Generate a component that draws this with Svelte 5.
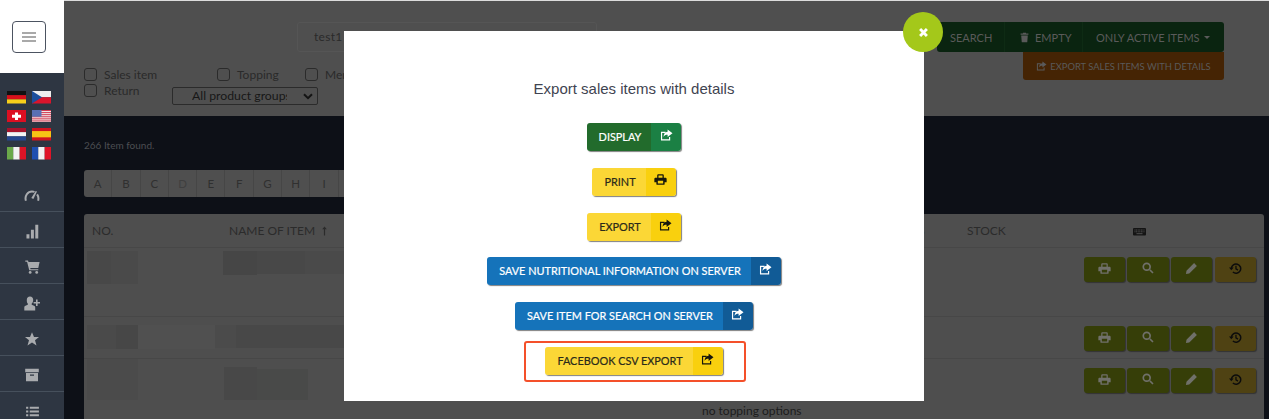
<script>
  const flags = ["de", "cz", "ch", "us", "nl", "es", "it", "fr"];
  const navIcons = ["gauge", "bars", "cart", "user", "star", "archive", "list"];
  const letters = "ABCDEFGHIJKL".split("");
  const modalButtons = [
    { label: "DISPLAY", tone: "green", icon: "share" },
    { label: "PRINT", tone: "yellow", icon: "print" },
    { label: "EXPORT", tone: "yellow", icon: "share" },
    { label: "SAVE NUTRITIONAL INFORMATION ON SERVER", tone: "blue", icon: "share" },
    { label: "SAVE ITEM FOR SEARCH ON SERVER", tone: "blue", icon: "share" },
    { label: "FACEBOOK CSV EXPORT", tone: "yellow", icon: "share", marked: true },
  ];
  // blurred-out cells of the item table
  const rows = [
    {
      cls: "r1",
      blocks: [
        { w: 24, h: 33, c: "#484848" },
        { w: 27, h: 33, c: "#4a4a4a" },
        { w: 85, h: 33, c: "#4e4e4e" },
        { w: 34, h: 24, c: "#464646" },
        { w: 48, h: 23, c: "#484848" },
        { w: 40, h: 23, c: "#4a4a4a" },
      ],
    },
    {
      cls: "r2",
      blocks: [
        { w: 29, h: 24, c: "#4a4a4a" },
        { w: 22, h: 24, c: "#474747" },
        { w: 77, h: 24, c: "#505050" },
        { w: 21, h: 23, c: "#4b4b4b" },
        { w: 108, h: 23, c: "#484848" },
      ],
    },
    {
      cls: "r3",
      blocks: [
        { w: 51, h: 41, c: "#4b4b4b" },
        { w: 86, h: 41, c: "#4e4e4e" },
        { w: 33, h: 33, c: "#484848", mt: 8 },
        { w: 51, h: 31, c: "#494a49", mt: 10 },
      ],
    },
  ];
</script>

{#snippet icon(name)}
  {#if name === "share"}
    <svg viewBox="0 0 14 13" width="13" height="12"><path d="M1 3h5v1.300H2.300v6.900h7.400V8.600H11V12.500H1z" /><path d="M8.200 0.500 13.500 4.600 8.200 8.600V6.200C6 6.200 4.600 6.800 3.800 8.600 3.800 5.600 5.400 3.200 8.200 3z" /></svg>
  {:else if name === "print"}
    <svg viewBox="0 0 14 12" width="13" height="11"><path fill-rule="evenodd" d="M3.400 1.600C3.400.7 4 .2 4.800.2h4.400c.8 0 1.400.5 1.400 1.400V4h1.700c.8 0 1.400.6 1.400 1.400V9h-2.200v1.800c0 .6-.4 1-1 1H3.500c-.6 0-1-.4-1-1V9H.3V5.400C.3 4.600.9 4 1.700 4h1.700zM4.800 1.500V4h4.400V1.500zM4.100 7.400v3h5.800v-3z" /></svg>
  {:else if name === "search"}
    <svg viewBox="0 0 14 14" width="12" height="12"><circle cx="5.500" cy="5.500" r="4" fill="none" stroke="currentColor" stroke-width="2" /><path d="M8.500 9.800 9.800 8.500 13.500 12.200 12.200 13.500z" /></svg>
  {:else if name === "pencil"}
    <svg viewBox="0 0 14 14" width="13" height="13"><path d="M9.800 1.200 12.800 4.200 4.600 12.400 1 13 1.600 9.400z" /></svg>
  {:else if name === "history"}
    <svg viewBox="0 0 14 14" width="13" height="13"><path fill="none" stroke="currentColor" stroke-width="1.600" d="M2.600 6.800A5 5 0 1 1 4.200 10.800" /><path d="M0 5.800h5L2.500 8.800z" /><path fill="none" stroke="currentColor" stroke-width="1.400" d="M7.500 4v3.400l2.200 1.400" /></svg>
  {:else if name === "trash"}
    <svg viewBox="0 0 11 14" width="9" height="11"><path d="M3.500.8h4v1.200h3V3.400H.5V2h3zM1.300 4.400h8.400L9 13.200H2z" /></svg>
  {:else if name === "gauge"}
    <svg viewBox="0 0 16 11" width="16" height="11"><path fill="none" stroke="currentColor" stroke-width="2" d="M1.900 10.700C.4 6 3.800 1.400 8 1.400c.9 0 1.800.2 2.500.6M13.100 4.300c1.300 1.800 1.600 4.200 1 6.400" /><path d="M11.700.9 13 1.600 9.400 8.900 7.300 8z" /></svg>
  {:else if name === "bars"}
    <svg viewBox="0 0 14 16" width="13" height="15"><path d="M.5 11h3.200v4.500H.5zM5.300 6h3.200v9.500H5.300zM10 .8h3.200v14.700H10z" /></svg>
  {:else if name === "cart"}
    <svg viewBox="0 0 16 15" width="15" height="14"><path d="M.3.500h2.900l.5 1.700h11.900l-1.400 6.300H5.600l.3 1.300h8.300v1.300H4.500L2.200 1.800H.3z" /><circle cx="5.500" cy="13.300" r="1.500" /><circle cx="12.500" cy="13.300" r="1.500" /></svg>
  {:else if name === "user"}
    <svg viewBox="0 0 16 15" width="16" height="15"><path d="M6 .5c2 0 3.200 1.500 3.200 3.500 0 1.500-.7 3-1.500 3.600v1.200c1.500.6 3.500 1 3.500 2.500v3.200H.3v-3.200c0-1.500 2-1.900 3.500-2.500V7.600C3 7 2.800 5.500 2.800 4 2.800 2 4 .5 6 .5z" /><path d="M12 3.500h1.600v2.400H16v1.600h-2.400v2.400H12V7.500H9.600V5.900H12z" /></svg>
  {:else if name === "star"}
    <svg viewBox="0 0 14 14" width="14" height="14"><path d="M7 .3 9 5h5L10 8.300l1.500 5.200L7 10.600 2.500 13.500 4 8.300 0 5h5z" /></svg>
  {:else if name === "archive"}
    <svg viewBox="0 0 14 14" width="14" height="14"><path fill-rule="evenodd" d="M.2.800h13.600v3.400H.2zM1 5h12v8.200H1zM5 6.500v1.300h4V6.500z" /></svg>
  {:else if name === "list"}
    <svg viewBox="0 0 14 12" width="13" height="11"><path d="M0 .8h2.400v2.200H0zM4 .8h10v2.200H4zM0 4.900h2.400v2.200H0zM4 4.900h10v2.200H4zM0 9h2.400v2.200H0zM4 9h10v2.200H4z" /></svg>
  {/if}
{/snippet}

{#snippet flag(code)}
  <svg class="flag" viewBox="0 0 19 13" preserveAspectRatio="none">
    {#if code === "de"}
      <rect width="19" height="4.400" fill="#111" /><rect y="4.300" width="19" height="4.400" fill="#d8101a" /><rect y="8.700" width="19" height="4.300" fill="#f7cf1a" />
    {:else if code === "cz"}
      <rect width="19" height="6.500" fill="#eee" /><rect y="6.500" width="19" height="6.500" fill="#d8152c" /><path d="M0 0 10 6.500 0 13z" fill="#1c4f9c" />
    {:else if code === "ch"}
      <rect width="19" height="13" fill="#dc0f22" /><path d="M8 2.500h3v2.500h3v3h-3v2.500H8V8H5V5h3z" fill="#fff" />
    {:else if code === "us"}
      <rect width="19" height="13" fill="#f4f4f4" />
      {#each [0, 2, 4, 6, 8, 10, 12] as y}<rect y={y} width="19" height="1" fill="#d0324a" />{/each}
      <rect width="9.500" height="7" fill="#5a70b4" />
    {:else if code === "nl"}
      <rect width="19" height="4.400" fill="#a8132c" /><rect y="4.300" width="19" height="4.400" fill="#f4f4f4" /><rect y="8.700" width="19" height="4.300" fill="#24478f" />
    {:else if code === "es"}
      <rect width="19" height="13" fill="#d0141f" /><rect y="3.200" width="19" height="6.500" fill="#f7c415" />
    {:else if code === "it"}
      <rect width="6.400" height="13" fill="#6aa84a" /><rect x="6.300" width="6.400" height="13" fill="#f2f2f2" /><rect x="12.700" width="6.300" height="13" fill="#dc1426" />
    {:else if code === "fr"}
      <rect width="6.400" height="13" fill="#1f4fb0" /><rect x="6.300" width="6.400" height="13" fill="#f2f2f2" /><rect x="12.700" width="6.300" height="13" fill="#e01428" />
    {/if}
  </svg>
{/snippet}

<div class="page">
  <aside class="sidebar">
    <div class="logo">
      <button class="burger" type="button" aria-label="menu"><span></span><span></span><span></span></button>
    </div>
    <div class="flags">
      {#each flags as code}
        {@render flag(code)}
      {/each}
    </div>
    <nav class="nav">
      {#each navIcons as name}
        <div class="nav-item">{@render icon(name)}</div>
      {/each}
    </nav>
  </aside>

  <main class="main">
    <section class="band">
      <div class="band-left">
        <div class="search-input">test1</div>
        <div class="filters">
          <label class="check c1"><i></i>Sales item</label>
          <label class="check c2"><i></i>Topping</label>
          <label class="check"><i></i>Menu</label>
        </div>
        <div class="filters second">
          <label class="check c3"><i></i>Return</label>
          <div class="select">
            <span>All product groups</span>
            <svg viewBox="0 0 10 7" width="10" height="7"><path d="M1 1.200 5 5.200 9 1.200" fill="none" stroke="#141414" stroke-width="2" /></svg>
          </div>
        </div>
      </div>
      <div class="band-right">
        <div class="toolbar">
          <span class="tool t-search">SEARCH</span>
          <span class="tool t-empty">{@render icon("trash")}EMPTY</span>
          <span class="tool t-active">ONLY ACTIVE ITEMS<b class="caret"></b></span>
        </div>
        <div class="export-all">{@render icon("share")}EXPORT SALES ITEMS WITH DETAILS</div>
      </div>
    </section>

    <section class="content">
      <div class="found">266 Item found.</div>
      <div class="letters">
        {#each letters as l}
          <span class:off={l === "D"}>{l}</span>
        {/each}
      </div>
      <div class="card">
        <div class="thead">
          <span>NO.</span>
          <span class="sorted">NAME OF ITEM
            <svg viewBox="0 0 5 10" width="5" height="10"><path d="M2.500 0.500 4.800 3.200H3.100V9.500H1.900V3.200H.2z" /></svg>
          </span>
          <span class="sliver">S</span>
          <span>STOCK</span>
          <svg class="kbd" viewBox="0 0 13 8" width="13" height="8"><rect width="13" height="7.500" rx="1" fill="#141414" /><path d="M1.500 2h10M1.500 3.800h10" stroke="#6a6a6a" stroke-width=".7" stroke-dasharray="1 .6" /><path d="M3.500 5.700h6" stroke="#6a6a6a" stroke-width=".7" /></svg>
        </div>
        {#each rows as row}
          <div class="row {row.cls}">
            <div class="blocks">
              {#each row.blocks as b}
                <span style:width="{b.w}px" style:height="{b.h}px" style:background={b.c} style:margin-top="{b.mt ?? 0}px"></span>
              {/each}
            </div>
            <div class="actions">
              <span class="act">{@render icon("print")}</span>
              <span class="act">{@render icon("search")}</span>
              <span class="act">{@render icon("pencil")}</span>
              <span class="act last">{@render icon("history")}</span>
            </div>
          </div>
        {/each}
        <div class="no-topping">no topping options</div>
      </div>
    </section>
  </main>

  <div class="modal">
    <button class="close" type="button" aria-label="close">
      <svg viewBox="0 0 10 10" width="9" height="9"><path d="M1.200 1.200 8.800 8.800M8.800 1.200 1.200 8.800" stroke="#fff" stroke-width="3.200" /></svg>
    </button>
    <h2>Export sales items with details</h2>
    <div class="stack">
      {#each modalButtons as b}
        <div class="btn-wrap" class:marked={b.marked}>
          <button class="btn {b.tone}" type="button">
            <span class="btn-label">{b.label}</span>
            <span class="btn-icon">{@render icon(b.icon)}</span>
          </button>
        </div>
      {/each}
    </div>
  </div>
</div>

<style>
  :global(body) {
    margin: 0;
    background: #0d1017;
  }
  svg {
    fill: currentColor;
    display: block;
    flex: none;
  }
  .page {
    position: relative;
    display: flex;
    width: 1269px;
    height: 419px;
    overflow: hidden;
    font-family: Lato, "Liberation Sans", sans-serif;
  }

  .sidebar {
    width: 64px;
    flex: none;
    background: #2e3642;
    display: flex;
    flex-direction: column;
  }
  .logo {
    height: 73px;
    flex: none;
    background: #fff;
    padding: 21px 0 0 12px;
    box-sizing: border-box;
  }
  .burger {
    width: 34px;
    height: 32px;
    padding: 0;
    background: #fff;
    border: 1px solid #4c5361;
    border-radius: 4px;
    display: flex;
    flex-direction: column;
    align-items: center;
    justify-content: center;
    gap: 1.500px;
  }
  .burger span {
    width: 14px;
    height: 2.500px;
    background: #a9a9a9;
  }
  .flags {
    flex: none;
    display: grid;
    grid-template-columns: 19px 19px;
    grid-auto-rows: 12.500px;
    column-gap: 6px;
    row-gap: 6.200px;
    padding: 18px 0 0 7px;
    height: 84px;
  }
  .flag {
    width: 19px;
    height: 12.500px;
  }
  .nav {
    flex: none;
    margin-top: 1px;
  }
  .nav-item {
    height: 36px;
    box-sizing: border-box;
    padding-top: 3px;
    border-bottom: 1px solid #46505c;
    display: flex;
    align-items: center;
    justify-content: center;
    color: #a9abae;
  }

  .main {
    flex: 1;
    min-width: 0;
    display: flex;
    flex-direction: column;
    background: #dcdcdc;
  }
  .band {
    height: 115px;
    margin-top: 1px;
    flex: none;
    background: #4f4f4f;
    display: flex;
    justify-content: space-between;
    padding: 21px 45px 0 20px;
    box-sizing: border-box;
    color: #2a2a2a;
  }
  .search-input {
    margin-left: 213px;
    width: 300px;
    height: 30px;
    box-sizing: border-box;
    border: 1px solid #555;
    border-radius: 3px;
    padding-left: 16px;
    font-size: 12px;
    line-height: 28px;
    letter-spacing: 0.300px;
  }
  .filters {
    display: flex;
    margin-top: 15px;
    font-size: 12px;
    line-height: 16px;
  }
  .filters.second {
    margin-top: 0;
  }
  .check {
    display: flex;
    align-items: center;
    gap: 7px;
    height: 16px;
  }
  .check i {
    width: 11px;
    height: 11px;
    border: 1px solid #2b2b2b;
    border-radius: 3px;
    margin-top: -2px;
  }
  .c1 {
    width: 133px;
  }
  .c2 {
    width: 88px;
  }
  .c3 {
    width: 88px;
  }
  .select {
    width: 146px;
    height: 18px;
    margin-top: 4px;
    box-sizing: border-box;
    border: 1px solid #2b2b2b;
    border-radius: 2px;
    display: flex;
    align-items: center;
    padding-left: 19px;
    color: #171717;
    gap: 16px;
    font-size: 12.250px;
  }
  .select span {
    width: 95px;
    overflow: hidden;
    white-space: nowrap;
  }
  .band-right {
    width: 287px;
    display: flex;
    flex-direction: column;
    align-items: flex-end;
    color: #5a5a5a;
    font-size: 11px;
  }
  .toolbar {
    width: 100%;
    height: 30px;
    background: #0a2410;
    border-radius: 3px;
    display: flex;
    align-items: center;
  }
  .tool {
    height: 100%;
    display: flex;
    align-items: center;
    gap: 6px;
    border-right: 1px solid #0e2b14;
    box-sizing: border-box;
  }
  .t-search {
    padding-left: 13px;
    width: 68px;
  }
  .t-empty {
    padding-left: 15px;
    width: 78px;
  }
  .t-active {
    padding-left: 13px;
    border: 0;
    gap: 4px;
  }
  .caret {
    border: 3.500px solid transparent;
    border-top-color: currentColor;
    border-bottom: 0;
  }
  .export-all {
    width: 201px;
    height: 28px;
    background: #452404;
    border-radius: 0 0 3px 3px;
    display: flex;
    align-items: center;
    justify-content: center;
    gap: 3px;
    font-size: 9.400px;
  }
  .export-all svg {
    width: 11px;
    height: 10px;
  }

  .content {
    flex: 1;
    background: #0d1017;
    padding: 21px 5px 0 20px;
    min-height: 0;
  }
  .found {
    font-size: 10px;
    line-height: 16px;
    color: #4c4e52;
  }
  .letters {
    display: flex;
    margin-top: 17px;
    height: 27px;
    width: 340px;
    background: #4f4f4f;
    border-radius: 3px;
    overflow: hidden;
  }
  .letters span {
    width: 28.300px;
    flex: none;
    box-sizing: border-box;
    border-right: 1px solid #464646;
    display: flex;
    align-items: center;
    justify-content: center;
    font-size: 11.500px;
    color: #303030;
  }
  .letters .off {
    color: #3f3f3f;
  }
  .card {
    margin-top: 17px;
    background: #4e4e4e;
    border-radius: 3px 3px 0 0;
    height: 205px;
    overflow: hidden;
  }
  .thead {
    height: 34px;
    box-sizing: border-box;
    display: flex;
    align-items: center;
    padding: 0 0 0 8px;
    border-bottom: 1px solid #474747;
    font-size: 12px;
    color: #2b2b2b;
  }
  .thead span {
    flex: none;
  }
  .thead span:nth-child(1) {
    width: 137px;
  }
  .thead span:nth-child(2) {
    width: 689px;
  }
  .sorted {
    display: flex;
    align-items: center;
    gap: 4px;
    white-space: pre;
  }
  .thead .sliver {
    width: 49px;
  }
  .kbd {
    margin-left: 127px;
    margin-top: 3px;
  }
  .row {
    display: flex;
    justify-content: space-between;
    box-sizing: border-box;
    border-bottom: 1px solid #474747;
    padding: 3px 8px 0 3px;
  }
  .r1 {
    height: 69px;
  }
  .r2 {
    height: 42px;
    padding-top: 8px;
  }
  .r3 {
    height: 44px;
    padding-top: 0;
    border: 0;
  }
  .blocks {
    display: flex;
    align-items: flex-start;
  }
  .blocks span {
    display: block;
    flex: none;
  }
  .actions {
    display: flex;
    gap: 2px;
    margin-top: 6px;
  }
  .r2 .actions {
    margin-top: 1px;
  }
  .r3 .actions {
    margin-top: 9px;
  }
  .act {
    width: 41.250px;
    height: 25px;
    background: #363e08;
    border-radius: 3px;
    box-shadow: 1px 1px 1px rgba(0, 0, 0, 0.35);
    color: #70706a;
    display: flex;
    align-items: center;
    justify-content: center;
    padding-bottom: 3px;
    box-sizing: border-box;
  }
  .act.last {
    background: #4f4213;
    color: #0c0c0c;
    margin-left: 1px;
  }
  .no-topping {
    padding-left: 618px;
    font-size: 12px;
    line-height: 16px;
    color: #1c1c1c;
  }

  .modal {
    position: absolute;
    left: 344px;
    top: 31px;
    width: 580px;
    height: 370px;
    background: #fff;
    z-index: 2;
    display: flex;
    flex-direction: column;
    align-items: center;
  }
  .close {
    position: absolute;
    right: -19px;
    top: -19px;
    width: 40px;
    height: 40px;
    padding: 0;
    border: 0;
    border-radius: 50%;
    background: #a4c81a;
    display: flex;
    align-items: center;
    justify-content: center;
  }
  h2 {
    margin: 49px 0 0;
    height: 18px;
    font: 400 15px/18px "Liberation Sans", sans-serif;
    color: #3f4451;
  }
  .stack {
    margin-top: 25px;
    display: flex;
    flex-direction: column;
    align-items: center;
  }
  .btn-wrap {
    height: 44.800px;
  }
  .btn-wrap.marked {
    position: relative;
  }
  .btn-wrap.marked::after {
    content: "";
    position: absolute;
    left: -21px;
    right: -23px;
    top: -6px;
    height: 37px;
    border: 2px solid #f4502a;
    border-radius: 3px;
  }
  .btn {
    display: flex;
    height: 28px;
    padding: 0;
    border: 0;
    border-radius: 3px;
    overflow: hidden;
    box-shadow: 1px 1px 1px rgba(0, 0, 0, 0.5);
    font: 400 10.900px/28px Lato, "Liberation Sans", sans-serif;
  }
  .btn-label {
    padding: 0 10px 0 12px;
    -webkit-text-stroke: 0.200px currentColor;
  }
  .btn-icon {
    width: 30px;
    display: flex;
    justify-content: center;
    padding-top: 6px;
    box-sizing: border-box;
  }
  .green .btn-label {
    background: #226b2c;
    color: #fff;
  }
  .green .btn-icon {
    background: #1b8044;
    color: #fff;
  }
  .yellow .btn-label {
    background: #fbd736;
    color: #2a2a1a;
  }
  .yellow .btn-icon {
    background: #f9d00e;
    color: #17170c;
  }
  .blue .btn-label {
    background: #1573ba;
    color: #fff;
  }
  .blue .btn-icon {
    background: #115b96;
    color: #fff;
  }
</style>
